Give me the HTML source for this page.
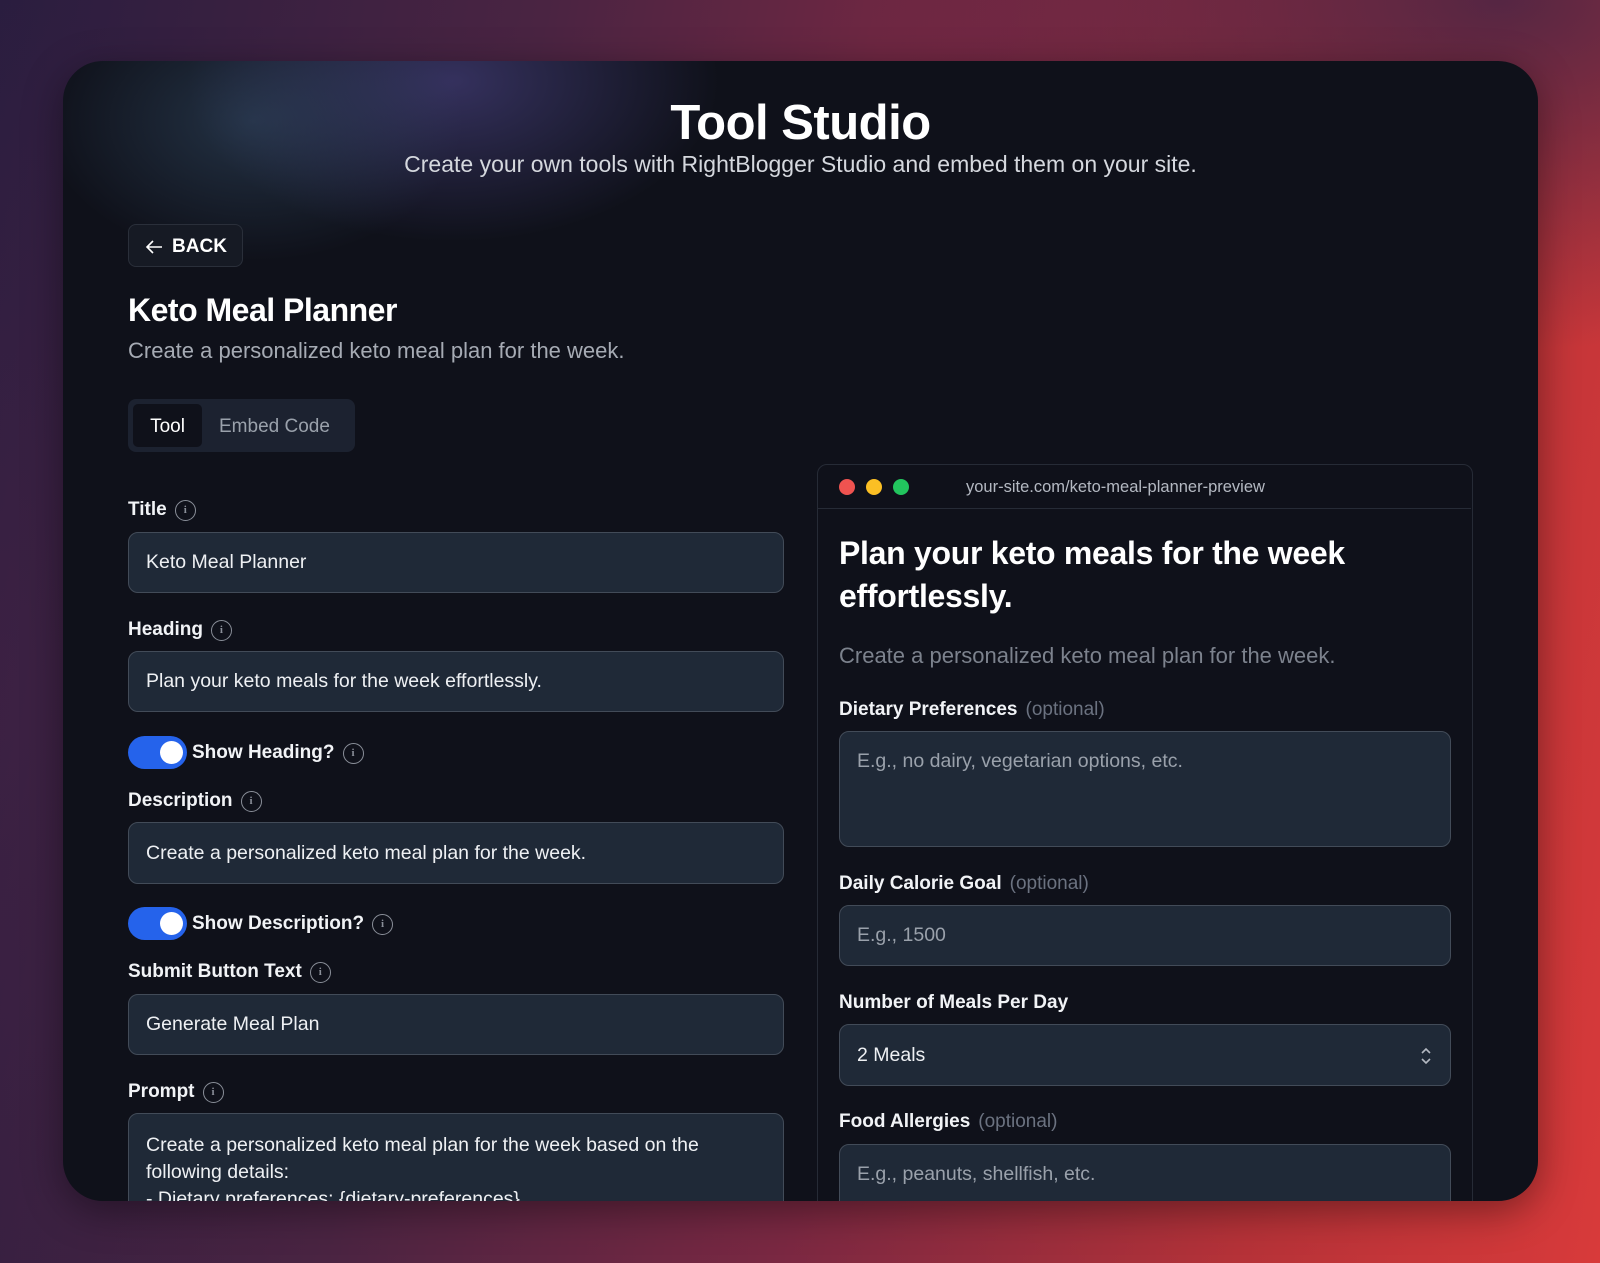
<!DOCTYPE html>
<html><head><meta charset="utf-8"><style>
*{box-sizing:border-box;margin:0;padding:0}
body{width:1600px;height:1263px;overflow:hidden;font-family:"Liberation Sans",sans-serif;position:relative;
background:linear-gradient(100deg,#2a1d3f 0%,#4a2442 30%,#7a2842 55%,#b53238 80%,#d83a3a 100%);}
.bgt{position:absolute;left:0;top:0;width:1600px;height:1263px;background:radial-gradient(ellipse 900px 500px at 1500px 0px,rgba(60,35,70,.8),transparent 70%),radial-gradient(ellipse 600px 1000px at 0px 700px,rgba(70,35,70,.5),transparent 70%);}
.card{position:absolute;left:63px;top:61px;width:1475px;height:1140px;border-radius:40px;background:#0f111a;overflow:hidden;box-shadow:0 10px 40px rgba(0,0,0,.4)}
.glow{position:absolute;left:0;top:0;width:1475px;height:500px;background:radial-gradient(ellipse 300px 200px at 190px 60px,rgba(60,90,120,.45),transparent 70%),radial-gradient(ellipse 380px 230px at 390px 20px,rgba(90,80,160,.5),transparent 70%);}
.a{position:absolute;white-space:nowrap}
.lbl{font-size:19px;font-weight:bold;color:#f1f3f6;display:flex;align-items:center;gap:8px}
.info{width:21px;height:21px;border:1.3px solid #8a8f99;border-radius:50%;color:#8a8f99;font-size:11px;font-family:"Liberation Serif",serif;display:inline-flex;align-items:center;justify-content:center}
.inp{position:absolute;background:#1f2937;border:1.5px solid #424b58;border-radius:10px;color:#eef0f3;font-size:19.5px;padding-left:17px;display:flex;align-items:center}
.ph{color:#9aa1ab}
.tog{position:absolute;width:59px;height:33px;border-radius:17px;background:#2563eb}
.tog::after{content:"";position:absolute;right:4px;top:5px;width:23px;height:23px;border-radius:50%;background:#fff}
.opt{color:#6b7280;font-weight:normal}
</style></head><body>
<div class="bgt"></div>
<div class="card">
<div class="glow"></div>
<div class="a" style="left:0;width:1475px;text-align:center;top:34px;font-size:49px;font-weight:bold;color:#fff;letter-spacing:-0.5px">Tool Studio</div>
<div class="a" style="left:0;width:1475px;text-align:center;top:90px;font-size:23px;color:#d5d8de">Create your own tools with RightBlogger Studio and embed them on your site.</div>
<div class="a" style="left:65px;top:163px;width:115px;height:43px;border:1.5px solid #2a2f3a;background:#161a24;border-radius:8px;color:#fff;font-weight:bold;font-size:19px;display:flex;align-items:center;justify-content:center;gap:8px;padding-top:2px">
<svg width="20" height="16" viewBox="0 0 20 16"><path d="M18 8H3M9 2L3 8l6 6" fill="none" stroke="#fff" stroke-width="1.6"/></svg>BACK</div>
<div class="a" style="left:65px;top:231px;font-size:32px;font-weight:bold;color:#fff;letter-spacing:-0.5px">Keto Meal Planner</div>
<div class="a" style="left:65px;top:277px;font-size:22px;color:#a6abb4">Create a personalized keto meal plan for the week.</div>
<div class="a" style="left:65px;top:338px;width:227px;height:53px;background:#1c2230;border-radius:8px">
<div class="a" style="left:5px;top:5px;width:69px;height:43px;background:#0f111a;border-radius:5px;color:#fff;font-size:19px;display:flex;align-items:center;justify-content:center;padding-top:2px">Tool</div>
<div class="a" style="left:91px;top:17px;color:#9aa1ab;font-size:19px">Embed Code</div></div>

<div class="a lbl" style="left:65px;top:438px">Title <span class="info">i</span></div>
<div class="inp" style="left:65px;top:471px;width:656px;height:61px">Keto Meal Planner</div>
<div class="a lbl" style="left:65px;top:558px">Heading <span class="info">i</span></div>
<div class="inp" style="left:65px;top:590px;width:656px;height:61px">Plan your keto meals for the week effortlessly.</div>
<div class="tog" style="left:65px;top:675px"></div>
<div class="a lbl" style="left:129px;top:681px">Show Heading? <span class="info">i</span></div>
<div class="a lbl" style="left:65px;top:729px">Description <span class="info">i</span></div>
<div class="inp" style="left:65px;top:761px;width:656px;height:62px">Create a personalized keto meal plan for the week.</div>
<div class="tog" style="left:65px;top:846px"></div>
<div class="a lbl" style="left:129px;top:852px">Show Description? <span class="info">i</span></div>
<div class="a lbl" style="left:65px;top:900px">Submit Button Text <span class="info">i</span></div>
<div class="inp" style="left:65px;top:933px;width:656px;height:61px">Generate Meal Plan</div>
<div class="a lbl" style="left:65px;top:1020px">Prompt <span class="info">i</span></div>
<div class="inp" style="left:65px;top:1052px;width:656px;height:150px;padding-top:18px;padding-right:70px;line-height:27px;white-space:normal;display:block">Create a personalized keto meal plan for the week based on the following details:<br>- Dietary preferences: {dietary-preferences}</div>

<div class="a" style="left:754px;top:403px;width:656px;height:760px;border:1.5px solid #262b36;border-radius:10px;background:#0f111a">
<div class="a" style="left:0;top:0;width:653px;height:44px;border-bottom:1.5px solid #262b36"></div>
<div class="a" style="left:21px;top:14px;width:16px;height:16px;border-radius:50%;background:#ef5350"></div>
<div class="a" style="left:48px;top:14px;width:16px;height:16px;border-radius:50%;background:#fbbf24"></div>
<div class="a" style="left:75px;top:14px;width:16px;height:16px;border-radius:50%;background:#22c55e"></div>
<div class="a" style="left:148px;top:13px;font-size:16.5px;color:#b4b9c2">your-site.com/keto-meal-planner-preview</div>
<div class="a" style="left:21px;top:67px;font-size:32px;font-weight:bold;color:#fff;line-height:43px;letter-spacing:-0.3px">Plan your keto meals for the week<br>effortlessly.</div>
<div class="a" style="left:21px;top:178px;font-size:22px;color:#7c828d">Create a personalized keto meal plan for the week.</div>
<div class="a lbl" style="left:21px;top:234px">Dietary Preferences <span class="opt">(optional)</span></div>
<div class="inp" style="left:21px;top:266px;width:612px;height:116px;align-items:flex-start;padding-top:18px"><span class="ph">E.g., no dairy, vegetarian options, etc.</span></div>
<div class="a lbl" style="left:21px;top:408px">Daily Calorie Goal <span class="opt">(optional)</span></div>
<div class="inp" style="left:21px;top:440px;width:612px;height:61px"><span class="ph">E.g., 1500</span></div>
<div class="a lbl" style="left:21px;top:527px">Number of Meals Per Day</div>
<div class="inp" style="left:21px;top:559px;width:612px;height:62px">2 Meals
<svg style="position:absolute;right:18px;top:21px" width="12" height="20" viewBox="0 0 12 20"><path d="M2 7l4-4 4 4M2 13l4 4 4-4" fill="none" stroke="#b4b9c2" stroke-width="1.6"/></svg></div>
<div class="a lbl" style="left:21px;top:646px">Food Allergies <span class="opt">(optional)</span></div>
<div class="inp" style="left:21px;top:679px;width:612px;height:80px;align-items:flex-start;padding-top:18px"><span class="ph">E.g., peanuts, shellfish, etc.</span></div>
</div>
</div>
</body></html>
